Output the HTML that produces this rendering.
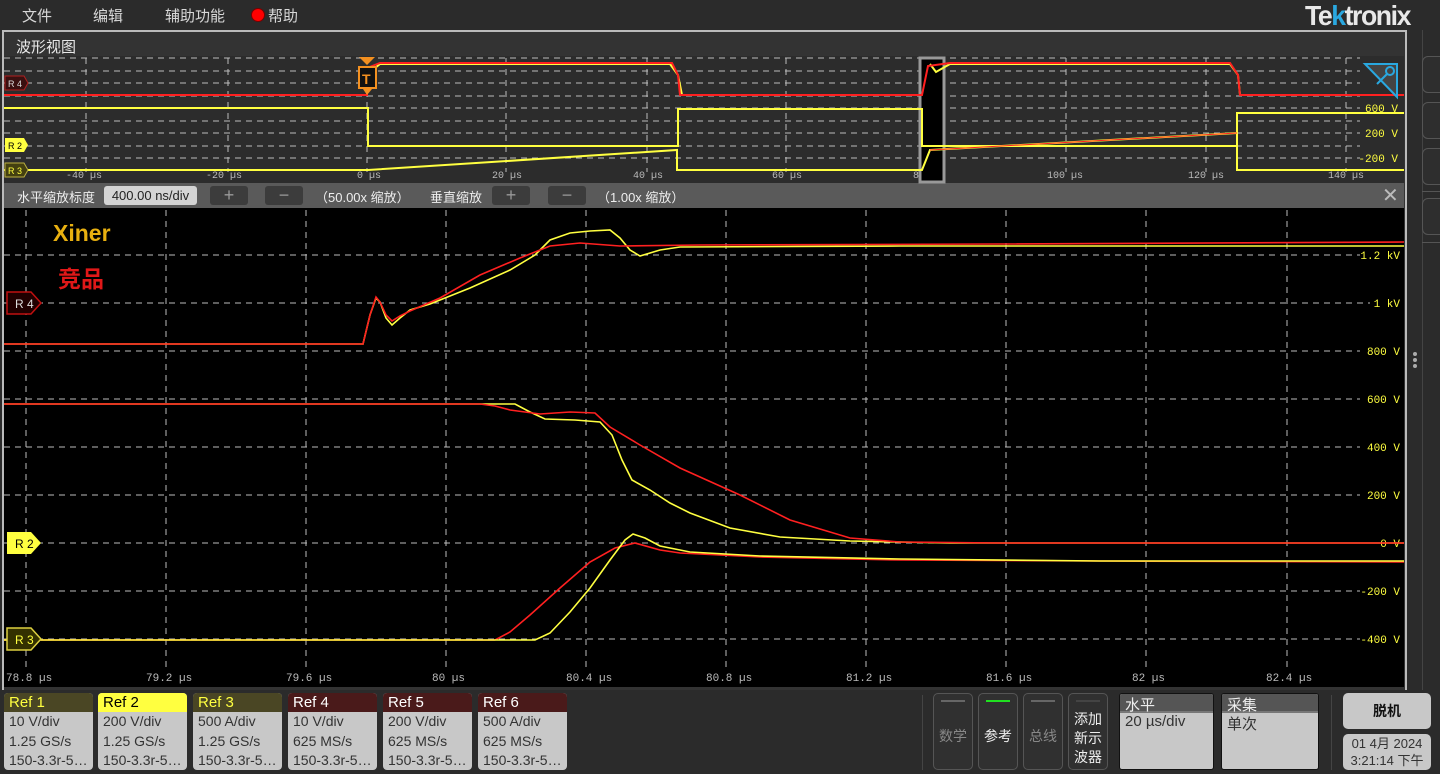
<!DOCTYPE html>
<html><head><meta charset="utf-8"><style>
*{margin:0;padding:0;box-sizing:border-box}
body{width:1440px;height:774px;background:#2b2b2b;font-family:"Liberation Sans","Noto Sans CJK SC",sans-serif;position:relative;overflow:hidden;color:#ddd}
.abs{position:absolute}
.menu{font-size:15px;color:#d8d8d8;top:5px}
.tab{position:absolute;top:693px;width:89px;height:77px;background:#c8c8c8;border-radius:4px;overflow:hidden;font-size:14px;color:#333}
.tab .h{height:19px;padding-left:5px;line-height:19px;font-size:15px}
.tab .b{padding-left:5px;line-height:19.5px;white-space:nowrap}
.btn{position:absolute;top:693px;width:40px;height:77px;border:1px solid #555;border-radius:5px;background:#303030;font-size:14px;text-align:center}
.btn i{position:absolute;left:7px;right:7px;top:6px;height:2px;background:#666}
.rb{position:absolute;left:1422px;width:30px;border:1px solid #555;border-radius:6px;background:#2e2e2e}
</style></head><body>
<div class="abs menu" style="left:22px">文件</div>
<div class="abs menu" style="left:93px">编辑</div>
<div class="abs menu" style="left:165px">辅助功能</div>
<div class="abs" style="left:251px;top:8px;width:14px;height:14px;border-radius:50%;background:#f00;border:1px solid #700"></div>
<div class="abs menu" style="left:268px">帮助</div>
<div class="abs" style="left:1305px;top:0px;font-size:28px;font-weight:bold;color:#e8e8e8;letter-spacing:-1.5px;transform:scaleX(0.95);transform-origin:left">Te<span style="color:#2aa8e0">k</span>tronix</div>

<!-- frame -->
<div class="abs" style="left:2px;top:30px;width:1405px;height:660px;border:2px solid #bbb;border-bottom:none;background:#333"></div>
<div class="abs" style="left:16px;top:36px;font-size:15px;color:#e8e8e8">波形视图</div>
<div class="abs" style="left:4px;top:56px;width:1400px;height:127px;background:#2c2c2c"></div>
<div class="abs" style="left:4px;top:183px;width:1400px;height:25px;background:#5a5a5a;font-size:13px;color:#eee">
 <span class="abs" style="left:13px;top:4px">水平缩放标度</span>
 <span class="abs" style="left:100px;top:3px;width:93px;height:19px;background:#d4d4d4;border-radius:3px;color:#222;text-align:center;line-height:19px">400.00 ns/div</span>
 <span class="abs" style="left:206px;top:3px;width:38px;height:19px;background:#3c3c3c;border-radius:3px;color:#999;text-align:center;font-size:18px;line-height:19px">+</span>
 <span class="abs" style="left:261px;top:3px;width:38px;height:19px;background:#3c3c3c;border-radius:3px;color:#999;text-align:center;font-size:18px;line-height:19px">−</span>
 <span class="abs" style="left:311px;top:4px">（50.00x 缩放）</span>
 <span class="abs" style="left:426px;top:4px">垂直缩放</span>
 <span class="abs" style="left:488px;top:3px;width:38px;height:19px;background:#3c3c3c;border-radius:3px;color:#999;text-align:center;font-size:18px;line-height:19px">+</span>
 <span class="abs" style="left:544px;top:3px;width:38px;height:19px;background:#3c3c3c;border-radius:3px;color:#999;text-align:center;font-size:18px;line-height:19px">−</span>
 <span class="abs" style="left:593px;top:4px">（1.00x 缩放）</span>
 <span class="abs" style="left:1378px;top:0px;font-size:20px;color:#bbb">✕</span>
</div>
<div class="abs" style="left:4px;top:208px;width:1400px;height:479px;background:#000"></div>

<svg class="abs" style="left:0;top:0" width="1440" height="774" font-family="Liberation Mono, monospace">
<g stroke="#bdbdbd" stroke-width="1" stroke-dasharray="6,5" fill="none">
 <path d="M4 58H1360M4 71H1360M4 83H1360M4 96H1360M4 108H1360M4 121H1360M4 133H1360M4 146H1360M4 158H1360"/>
 <path d="M86 58V172M228 58V172M367 58V172M506 58V172M647 58V172M786 58V172M927 58V172M1066 58V172M1206 58V172M1346 58V172"/>
 <path d="M4 255H1360M4 303H1370M4 351H1360M4 399H1360M4 447H1360M4 495H1360M4 543H1360M4 591H1360M4 639H1360"/>
 <path d="M26 210V670M166 210V670M306 210V670M446 210V670M586 210V670M726 210V670M866 210V670M1006 210V670M1146 210V670M1287 210V670"/>
</g>
<g fill="#bbb" font-size="10">
 <text x="66" y="178">-40 µs</text><text x="206" y="178">-20 µs</text><text x="357" y="178">0 µs</text><text x="492" y="178">20 µs</text><text x="633" y="178">40 µs</text><text x="772" y="178">60 µs</text><text x="913" y="178">80 µs</text><text x="1047" y="178">100 µs</text><text x="1188" y="178">120 µs</text><text x="1328" y="178">140 µs</text>
</g>
<g fill="#bbb" font-size="11">
 <text x="6" y="681">78.8 µs</text><text x="146" y="681">79.2 µs</text><text x="286" y="681">79.6 µs</text><text x="432" y="681">80 µs</text><text x="566" y="681">80.4 µs</text><text x="706" y="681">80.8 µs</text><text x="846" y="681">81.2 µs</text><text x="986" y="681">81.6 µs</text><text x="1132" y="681">82 µs</text><text x="1266" y="681">82.4 µs</text>
</g>
<g fill="#ffff40" font-size="11" text-anchor="end">
 <text x="1400" y="259">1.2 kV</text><text x="1400" y="307">1 kV</text><text x="1400" y="355">800 V</text><text x="1400" y="403">600 V</text><text x="1400" y="451">400 V</text><text x="1400" y="499">200 V</text><text x="1400" y="547">0 V</text><text x="1400" y="595">-200 V</text><text x="1400" y="643">-400 V</text>
 <text x="1398" y="112">600 V</text><text x="1398" y="137">200 V</text><text x="1398" y="162">-200 V</text>
</g>
<rect x="920" y="58" width="24" height="124" fill="#000" stroke="#999" stroke-width="3"/>
<g fill="none" stroke-width="2">
 <path stroke="#ffff40" d="M4 108H368V146H678V109H922V146H1237V113H1404"/>
 <path stroke="#ffff40" d="M4 170H368L677 150V170H922L930 150L1237 133V170H1404"/>
 <path stroke="#ffff40" d="M370 72L380 64H670L678 75L682 95M930 64L936 72L950 64H1230L1238 75L1240 95"/>
 <path stroke="#ff2020" d="M4 95H367V68L380 63H672L678 75L680 95H922L928 66L950 63H1230L1238 75L1240 95H1404"/>
 <path stroke="#ff2020" stroke-width="1" d="M930 150L1237 133"/>
</g>
<path d="M1365 64H1397V97Z" fill="#444" stroke="#29a8e0" stroke-width="2"/>
<circle cx="1390" cy="71" r="4" fill="none" stroke="#29a8e0" stroke-width="2"/><path d="M1387 74L1377 84" stroke="#29a8e0" stroke-width="2"/>
<path d="M359 57H375L367 65Z" fill="#f39020"/>
<rect x="359" y="67" width="17" height="21" fill="#111" stroke="#f39020" stroke-width="2"/>
<text x="362" y="84" fill="#f39020" font-size="14" font-weight="bold" font-family="Liberation Sans">T</text>
<path d="M363 89H372L367 95Z" fill="#f39020"/>
<path d="M5 76H24L28 83L24 90H5Z" fill="#3a1010" stroke="#b02020"/><text x="8" y="87" font-size="9" fill="#ddd" font-family="Liberation Sans">R 4</text>
<path d="M5 138H24L28 145L24 152H5Z" fill="#ffff40"/><text x="8" y="149" font-size="9" fill="#000" font-family="Liberation Sans">R 2</text>
<path d="M5 163H24L28 170L24 177H5Z" fill="#444010" stroke="#bbb040"/><text x="8" y="174" font-size="9" fill="#ffff40" font-family="Liberation Sans">R 3</text>

<g fill="none" stroke-width="1.6">
 <path stroke="#ffff40" d="M4 344H363L370 315L376 298L380 302L386 318L392 325L400 318L410 310L430 304L470 288L510 270L535 255L550 240L570 233L590 231L610 230L620 238L630 250L640 256L660 250L680 247L900 246L1404 246"/>
 <path stroke="#ff2020" d="M4 344H363L370 315L376 297L380 302L386 315L392 321L400 316L410 311L440 298L480 275L520 258L550 246L580 243L620 246L700 245L1000 244L1404 242"/>
 <path stroke="#ffff40" d="M4 404H515L530 412L545 419L575 420L600 422L612 435L622 460L632 480L650 490L670 503L690 513L730 528L780 537L850 541L950 543H1404"/>
 <path stroke="#ff2020" d="M4 404H480L495 406L510 410L540 414L570 412L595 413L610 427L640 445L680 468L740 495L790 520L850 538L900 542L1000 543H1404"/>
 <path stroke="#ff2020" d="M4 640H495L510 632L530 615L560 588L590 562L615 548L635 543L660 550L680 553L760 557L900 560L1100 561L1404 562"/>
 <path stroke="#ffff40" d="M4 640H535L550 633L570 612L590 588L610 560L625 540L633 534L645 538L660 546L690 552L760 556L900 559L1100 561L1404 561"/>
</g>
<path d="M7 292H31L41 303L31 314H7Z" fill="#200000" stroke="#c01010" stroke-width="1.5"/><text x="15" y="308" font-size="12" fill="#ddd" font-family="Liberation Sans">R 4</text>
<path d="M7 532H31L41 543L31 554H7Z" fill="#ffff40"/><text x="15" y="548" font-size="12" fill="#000" font-family="Liberation Sans">R 2</text>
<path d="M7 628H31L41 639L31 650H7Z" fill="#333000" stroke="#ddd040" stroke-width="1.5"/><text x="15" y="644" font-size="12" fill="#ffff40" font-family="Liberation Sans">R 3</text>
<text x="53" y="241" font-size="23" font-weight="bold" fill="#e8b010" font-family="Liberation Sans">Xiner</text>
<text x="58" y="287" font-size="23" font-weight="bold" fill="#e01818" font-family="Noto Sans CJK SC,sans-serif">竞品</text>
<circle cx="1415" cy="354" r="2" fill="#aaa"/><circle cx="1415" cy="360" r="2" fill="#aaa"/><circle cx="1415" cy="366" r="2" fill="#aaa"/>
</svg>

<div class="abs" style="left:1422px;top:30px;width:1px;height:660px;background:#444"></div>
<div class="rb" style="top:56px;height:37px"></div>
<div class="rb" style="top:102px;height:37px"></div>
<div class="rb" style="top:148px;height:37px"></div>
<div class="abs" style="left:1422px;top:191px;width:18px;height:1px;background:#555"></div>
<div class="rb" style="top:198px;height:37px"></div>
<div class="abs" style="left:1422px;top:242px;width:18px;height:1px;background:#555"></div>

<div class="tab" style="left:4px"><div class="h" style="background:#4a4624;color:#ffff40">Ref 1</div><div class="b">10 V/div<br>1.25 GS/s<br>150-3.3r-5…</div></div>
<div class="tab" style="left:98px"><div class="h" style="background:#ffff40;color:#000">Ref 2</div><div class="b">200 V/div<br>1.25 GS/s<br>150-3.3r-5…</div></div>
<div class="tab" style="left:193px"><div class="h" style="background:#4a4624;color:#ffff40">Ref 3</div><div class="b">500 A/div<br>1.25 GS/s<br>150-3.3r-5…</div></div>
<div class="tab" style="left:288px"><div class="h" style="background:#4a1a1a;color:#fff">Ref 4</div><div class="b">10 V/div<br>625 MS/s<br>150-3.3r-5…</div></div>
<div class="tab" style="left:383px"><div class="h" style="background:#4a1a1a;color:#fff">Ref 5</div><div class="b">200 V/div<br>625 MS/s<br>150-3.3r-5…</div></div>
<div class="tab" style="left:478px"><div class="h" style="background:#4a1a1a;color:#fff">Ref 6</div><div class="b">500 A/div<br>625 MS/s<br>150-3.3r-5…</div></div>

<div class="abs" style="left:922px;top:695px;width:1px;height:75px;background:#444"></div>
<div class="btn" style="left:933px;color:#888"><i></i><div style="margin-top:32px">数学</div></div>
<div class="btn" style="left:978px;color:#eee"><i style="background:#20e020"></i><div style="margin-top:32px">参考</div></div>
<div class="btn" style="left:1023px;color:#888"><i></i><div style="margin-top:32px">总线</div></div>
<div class="btn" style="left:1068px;color:#eee"><i style="background:#444"></i><div style="margin-top:16px;line-height:19px">添加<br>新示<br>波器</div></div>
<div class="abs" style="left:1119px;top:693px;width:95px;height:77px;background:#c8c8c8;border:1px solid #111;border-radius:3px;overflow:hidden;font-size:15px;color:#333"><div style="background:#555;color:#eee;height:19px;padding-left:5px;border-bottom:2px solid #777">水平</div><div style="padding-left:5px">20 µs/div</div></div>
<div class="abs" style="left:1221px;top:693px;width:98px;height:77px;background:#c8c8c8;border:1px solid #111;border-radius:3px;overflow:hidden;font-size:15px;color:#333"><div style="background:#555;color:#eee;height:19px;padding-left:5px;border-bottom:2px solid #777">采集</div><div style="padding-left:5px">单次</div></div>
<div class="abs" style="left:1331px;top:695px;width:1px;height:75px;background:#444"></div>
<div class="abs" style="left:1343px;top:693px;width:88px;height:36px;background:#c8c8c8;border-radius:5px;color:#111;font-weight:bold;font-size:14px;text-align:center;line-height:36px">脱机</div>
<div class="abs" style="left:1343px;top:734px;width:88px;height:36px;background:#c8c8c8;border-radius:5px;color:#333;font-size:13px;text-align:center;line-height:17px;padding-top:1px">01 4月 2024<br>3:21:14 下午</div>
</body></html>
